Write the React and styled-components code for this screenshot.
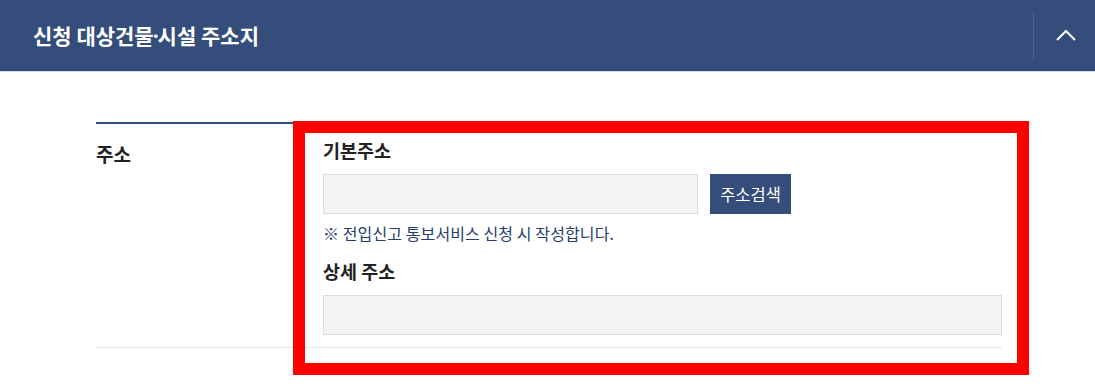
import styled, { createGlobalStyle } from 'styled-components';

const GlobalStyle = createGlobalStyle`
  html, body {
    margin: 0;
    padding: 0;
    background: #fff;
  }
  body {
    font-family: "Noto Sans CJK KR", "Noto Sans", sans-serif;
    color: #222;
  }
  * {
    box-sizing: border-box;
  }
`;

const App = () => {
  return (
    <>
      <GlobalStyle />
      <Page>
        <Header>
          <Title>
            신청 대상건물<Dot>·</Dot>시설 주소지
          </Title>
          <Toggle type="button" aria-label="접기">
            <svg width="20" height="12" viewBox="0 0 20 12" fill="none">
              <path d="M1 11L10 2L19 11" stroke="#fff" strokeWidth="2" />
            </svg>
          </Toggle>
        </Header>
        <Body>
          <Table>
            <Row>
              <Label>주소</Label>
              <Content>
                <FieldTitle>기본주소</FieldTitle>
                <InputRow>
                  <Input readOnly width="375px" />
                  <SearchButton type="button">주소검색</SearchButton>
                </InputRow>
                <Note>※ 전입신고 통보서비스 신청 시 작성합니다.</Note>
                <FieldTitle $top="14px">상세 주소</FieldTitle>
                <InputRow>
                  <Input width="100%" />
                </InputRow>
              </Content>
            </Row>
          </Table>
          <Highlight />
        </Body>
      </Page>
    </>
  );
};

const Page = styled.div`
  width: 1095px;
  height: 392px;
  overflow: hidden;
  position: relative;
`;

const Header = styled.div`
  display: flex;
  align-items: center;
  justify-content: space-between;
  height: 72px;
  background: #344d7a;
  border-bottom: 1px solid #d4d7dd;
`;

const Title = styled.h2`
  margin: 0 0 1px;
  padding-left: 33px;
  font-size: 21px;
  font-weight: 700;
  color: #fff;
  letter-spacing: 0;
`;

const Dot = styled.span`
  font-family: "Noto Sans", "DejaVu Sans", sans-serif;
  margin: 0 -1px;
`;

const Toggle = styled.button`
  display: flex;
  align-items: center;
  justify-content: center;
  width: 62px;
  height: 50px;
  padding: 0 0 2px 2px;
  border: 0;
  border-left: 1px solid #4a6290;
  background: transparent;
  cursor: pointer;
`;

const Body = styled.div`
  padding: 50px 93px 0 96px;
`;

const Table = styled.div`
  border-top: 2px solid #344d7a;
`;

const Row = styled.div`
  display: grid;
  grid-template-columns: 227px 1fr;
  border-bottom: 1px solid #e6e6e6;
`;

const Label = styled.div`
  padding-top: 17px;
  font-size: 19px;
  line-height: 26px;
  font-weight: 700;
  color: #222;
`;

const Content = styled.div`
  padding: 13px 0 12px;
`;

const FieldTitle = styled.div`
  margin-top: ${(p) => p.$top || '0'};
  font-size: 18.5px;
  line-height: 26px;
  font-weight: 700;
  color: #222;
`;

const InputRow = styled.div`
  display: flex;
  gap: 12px;
  margin-top: 11px;
`;

const Input = styled.input`
  width: ${(p) => p.width};
  height: 40px;
  border: 1px solid #dcdcdc;
  background: #f4f4f4;
  outline: none;
`;

const SearchButton = styled.button`
  height: 40px;
  width: 81px;
  padding: 0;
  border: 0;
  background: #344d7a;
  color: #fff;
  font-family: inherit;
  font-size: 16.5px;
`;

const Note = styled.p`
  margin: 8px 0 0;
  font-size: 16px;
  line-height: 22px;
  color: #243d6e;
  letter-spacing: 0.1px;
`;

const Highlight = styled.div`
  position: absolute;
  left: 293px;
  top: 121px;
  width: 736px;
  height: 254px;
  border: 12px solid #ff0000;
  pointer-events: none;
`;

export default App;
